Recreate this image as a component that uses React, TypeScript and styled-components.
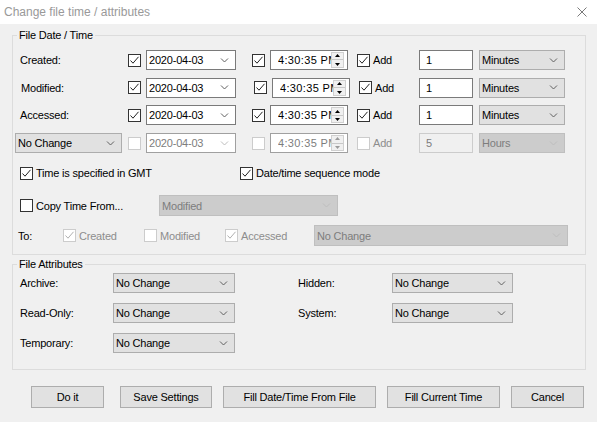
import React from "react";
import styled, { createGlobalStyle } from "styled-components";

const GlobalStyle = createGlobalStyle`
  body {
    margin: 0;
    background: #f0f0f0;
    font-family: "Liberation Sans", Arial, sans-serif;
    font-size: 11px;
    letter-spacing: -0.2px;
    color: #000;
  }
`;

const Window = styled.div`
  width: 597px;
  height: 422px;
  background: #f0f0f0;
  display: flex;
  flex-direction: column;
  overflow: hidden;
`;

const TitleBar = styled.div`
  height: 24px;
  background: #fff;
  display: flex;
  align-items: center;
  justify-content: space-between;
  padding: 0 10px 0 4px;
  flex-shrink: 0;
`;

const Title = styled.span`
  font-size: 12px;
  letter-spacing: 0;
  color: #999;
`;

const Content = styled.div`
  padding: 4px 11px 0 12px;
  display: flex;
  flex-direction: column;
`;

const Group = styled.fieldset<{ $gap?: number; $pb: number }>`
  margin: ${(p) => p.$gap || 0}px 0 0;
  padding: 0 0 ${(p) => p.$pb}px;
  border: 1px solid #dcdcdc;
  min-width: 0;
`;

const Legend = styled.legend`
  margin-left: 4px;
  padding: 0 2px;
  line-height: 14px;
`;

const TimeGrid = styled.div`
  display: grid;
  grid-template-columns: 115px 18px 90px 34px 78px 71px 54px 92px;
  grid-auto-rows: 20px;
  row-gap: 7.7px;
  padding-top: 8px;
  align-items: center;
`;

const RowLabel = styled.span<{ $indent?: number }>`
  padding-left: ${(p) => p.$indent ?? 7}px;
`;

const Cell = styled.div<{ $pad?: number }>`
  display: flex;
  align-items: center;
  height: 100%;
  padding-left: ${(p) => p.$pad || 0}px;
`;

const Box = styled.span<{ $off?: boolean }>`
  width: 13px;
  height: 13px;
  box-sizing: border-box;
  border: 1px solid ${(p) => (p.$off ? "#cccccc" : "#333333")};
  background: #fff;
  display: inline-flex;
  flex-shrink: 0;
`;

const CheckText = styled.span<{ $off?: boolean }>`
  margin-left: 3px;
  color: ${(p) => (p.$off ? "#8d8d8d" : "#000")};
  white-space: nowrap;
`;

const CheckWrap = styled.label<{ $w?: number; $nudge?: number }>`
  display: inline-flex;
  align-items: center;
  width: ${(p) => (p.$w ? `${p.$w}px` : "auto")};
  margin-left: ${(p) => p.$nudge || 0}px;
  flex-shrink: 0;
`;

const Check = ({
  checked,
  off,
  text,
  w,
  nudge,
}: {
  checked?: boolean;
  off?: boolean;
  text?: string;
  w?: number;
  nudge?: number;
}) => (
  <CheckWrap $w={w} $nudge={nudge}>
    <Box $off={off}>
      {checked && (
        <svg width="11" height="11" viewBox="0 0 11 11">
          <path
            d="M1.5 5.5 L4 8.2 L9.5 1.8"
            fill="none"
            stroke={off ? "#b0b0b0" : "#222"}
            strokeWidth="1"
          />
        </svg>
      )}
    </Box>
    {text && <CheckText $off={off}>{text}</CheckText>}
  </CheckWrap>
);

type ComboKind = "white" | "grey" | "disabled" | "disabledWhite";

const comboBg: Record<ComboKind, string> = {
  white: "#ffffff",
  grey: "#e1e1e1",
  disabled: "#cccccc",
  disabledWhite: "#ffffff",
};
const comboBorder: Record<ComboKind, string> = {
  white: "#7a7a7a",
  grey: "#adadad",
  disabled: "#bfbfbf",
  disabledWhite: "#a0a0a0",
};

const ComboBox = styled.div<{ $kind: ComboKind; $w: number; $h?: number; $ml?: number }>`
  width: ${(p) => p.$w}px;
  height: ${(p) => p.$h || 20}px;
  box-sizing: border-box;
  margin-left: ${(p) => p.$ml || 0}px;
  background: ${(p) => comboBg[p.$kind]};
  border: 1px solid ${(p) => comboBorder[p.$kind]};
  color: ${(p) => (p.$kind === "disabled" || p.$kind === "disabledWhite" ? "#7d7d7d" : "#000")};
  display: flex;
  align-items: center;
  justify-content: space-between;
  padding: 0 6px 0 2px;
  flex-shrink: 0;
  white-space: nowrap;
`;

const Combo = ({
  kind,
  w,
  h,
  ml,
  children,
}: {
  kind: ComboKind;
  w: number;
  h?: number;
  ml?: number;
  children: React.ReactNode;
}) => (
  <ComboBox $kind={kind} $w={w} $h={h} $ml={ml}>
    <span>{children}</span>
    <svg width="9" height="5" viewBox="0 0 9 5">
      <path
        d="M1 0.5 L4.5 4 L8 0.5"
        fill="none"
        stroke={kind === "disabled" || kind === "disabledWhite" ? "#bdbdbd" : "#606060"}
        strokeWidth="1"
      />
    </svg>
  </ComboBox>
);

const TimeBox = styled.div<{ $off?: boolean; $nudge?: number }>`
  width: 78px;
  height: 20px;
  box-sizing: border-box;
  margin-left: ${(p) => p.$nudge || 0}px;
  background: #fff;
  border: 1px solid ${(p) => (p.$off ? "#a0a0a0" : "#7a7a7a")};
  color: ${(p) => (p.$off ? "#7d7d7d" : "#000")};
  display: flex;
  align-items: center;
  padding: 0 3px 0 7px;
`;

const TimeText = styled.span`
  flex: 1;
  overflow: hidden;
  white-space: nowrap;
  letter-spacing: 0.35px;
`;

const Spinner = styled.div`
  width: 13px;
  height: 16px;
  box-sizing: border-box;
  border: 1px solid #d0d0d0;
  background: #f0f0f0;
  display: flex;
  flex-direction: column;
  justify-content: space-around;
  align-items: center;
`;

const SpinDivider = styled.span`
  width: 100%;
  height: 1px;
  background: #c8c8c8;
`;

const Time = ({ off, nudge }: { off?: boolean; nudge?: number }) => {
  const c = off ? "#9a9a9a" : "#000";
  return (
    <TimeBox $off={off} $nudge={nudge}>
      <TimeText>4:30:35 PM</TimeText>
      <Spinner>
        <svg width="5" height="3" viewBox="0 0 5 3">
          <path d="M0 3 L2.5 0 L5 3 Z" fill={c} />
        </svg>
        <SpinDivider />
        <svg width="5" height="3" viewBox="0 0 5 3">
          <path d="M0 0 L2.5 3 L5 0 Z" fill={c} />
        </svg>
      </Spinner>
    </TimeBox>
  );
};

const NumberField = styled.div<{ $off?: boolean }>`
  width: 54px;
  height: 20px;
  box-sizing: border-box;
  background: ${(p) => (p.$off ? "#f0f0f0" : "#fff")};
  border: 1px solid ${(p) => (p.$off ? "#cccccc" : "#7a7a7a")};
  color: ${(p) => (p.$off ? "#7d7d7d" : "#000")};
  display: flex;
  align-items: center;
  padding-left: 6px;
`;

const OptionRow = styled.div<{ $mt: number; $h: number; $pl?: number }>`
  display: flex;
  align-items: center;
  height: ${(p) => p.$h}px;
  margin-top: ${(p) => p.$mt}px;
  padding-left: ${(p) => p.$pl ?? 7}px;
`;

const ToLabel = styled.span`
  width: 45px;
  flex-shrink: 0;
`;

const AttrGrid = styled.div`
  display: grid;
  grid-template-columns: 93px 122px 63px 94px 121px;
  grid-auto-rows: 20px;
  row-gap: 10px;
  padding: 2px 0 0 7px;
  align-items: center;
`;

const Footer = styled.div`
  display: flex;
  gap: 11px;
  margin-top: 16px;
  padding-left: 19px;
`;

const Button = styled.button<{ $w: number; $mr?: number }>`
  width: ${(p) => p.$w}px;
  height: 22px;
  margin: 0 ${(p) => p.$mr || 0}px 0 0;
  padding: 0;
  background: #e1e1e1;
  border: 1px solid #adadad;
  font: inherit;
  letter-spacing: inherit;
  color: #000;
`;

type TimeRowData = { label: string; nudge?: number; indent?: number };

const rows: TimeRowData[] = [
  { label: "Created:" },
  { label: "Modified:", nudge: 2, indent: 8 },
  { label: "Accessed:" },
];

const attrs = [
  ["Archive:", "Hidden:"],
  ["Read-Only:", "System:"],
  ["Temporary:", ""],
];

export default function App() {
  return (
    <Window>
      <GlobalStyle />
      <TitleBar>
        <Title>Change file time / attributes</Title>
        <svg width="10" height="10" viewBox="0 0 10 10">
          <path d="M0.5 0.5 L9.5 9.5 M9.5 0.5 L0.5 9.5" stroke="#7a7a7a" strokeWidth="1" />
        </svg>
      </TitleBar>
      <Content>
        <Group $pb={8}>
          <Legend>File Date / Time</Legend>
          <TimeGrid>
            {rows.map((r) => (
              <React.Fragment key={r.label}>
                <RowLabel $indent={r.indent}>{r.label}</RowLabel>
                <Cell>
                  <Check checked />
                </Cell>
                <Cell>
                  <Combo kind="white" w={90}>2020-04-03</Combo>
                </Cell>
                <Cell $pad={16}>
                  <Check checked nudge={r.nudge} />
                </Cell>
                <Cell>
                  <Time nudge={r.nudge} />
                </Cell>
                <Cell $pad={9}>
                  <Check checked text="Add" nudge={r.nudge} />
                </Cell>
                <Cell>
                  <NumberField>1</NumberField>
                </Cell>
                <Cell $pad={6}>
                  <Combo kind="grey" w={86}>Minutes</Combo>
                </Cell>
              </React.Fragment>
            ))}
            <Cell>
              <Combo kind="grey" w={107} ml={2}>No Change</Combo>
            </Cell>
            <Cell>
              <Check off />
            </Cell>
            <Cell>
              <Combo kind="disabledWhite" w={90}>2020-04-03</Combo>
            </Cell>
            <Cell $pad={16}>
              <Check off />
            </Cell>
            <Cell>
              <Time off />
            </Cell>
            <Cell $pad={9}>
              <Check off text="Add" />
            </Cell>
            <Cell>
              <NumberField $off>5</NumberField>
            </Cell>
            <Cell $pad={6}>
              <Combo kind="disabled" w={86}>Hours</Combo>
            </Cell>
          </TimeGrid>
          <OptionRow $mt={10} $h={20}>
            <Check checked text="Time is specified in GMT" w={220} />
            <Check checked text="Date/time sequence mode" />
          </OptionRow>
          <OptionRow $mt={12} $h={21}>
            <Check text="Copy Time From..." w={139} />
            <Combo kind="disabled" w={179} h={21}>Modified</Combo>
          </OptionRow>
          <OptionRow $mt={9} $h={21} $pl={5}>
            <ToLabel>To:</ToLabel>
            <Check checked off text="Created" w={81} />
            <Check off text="Modified" w={81} />
            <Check checked off text="Accessed" w={89} />
            <Combo kind="disabled" w={254} h={21}>No Change</Combo>
          </OptionRow>
        </Group>
        <Group $gap={2} $pb={16}>
          <Legend>File Attributes</Legend>
          <AttrGrid>
            {attrs.map(([a, b]) => (
              <React.Fragment key={a}>
                <span>{a}</span>
                <Combo kind="grey" w={122}>No Change</Combo>
                <span />
                <span>{b}</span>
                {b ? <Combo kind="grey" w={121}>No Change</Combo> : <span />}
              </React.Fragment>
            ))}
          </AttrGrid>
        </Group>
        <Footer>
          <Button $w={73} $mr={5}>Do it</Button>
          <Button $w={92}>Save Settings</Button>
          <Button $w={153}>Fill Date/Time From File</Button>
          <Button $w={113}>Fill Current Time</Button>
          <Button $w={73}>Cancel</Button>
        </Footer>
      </Content>
    </Window>
  );
}
